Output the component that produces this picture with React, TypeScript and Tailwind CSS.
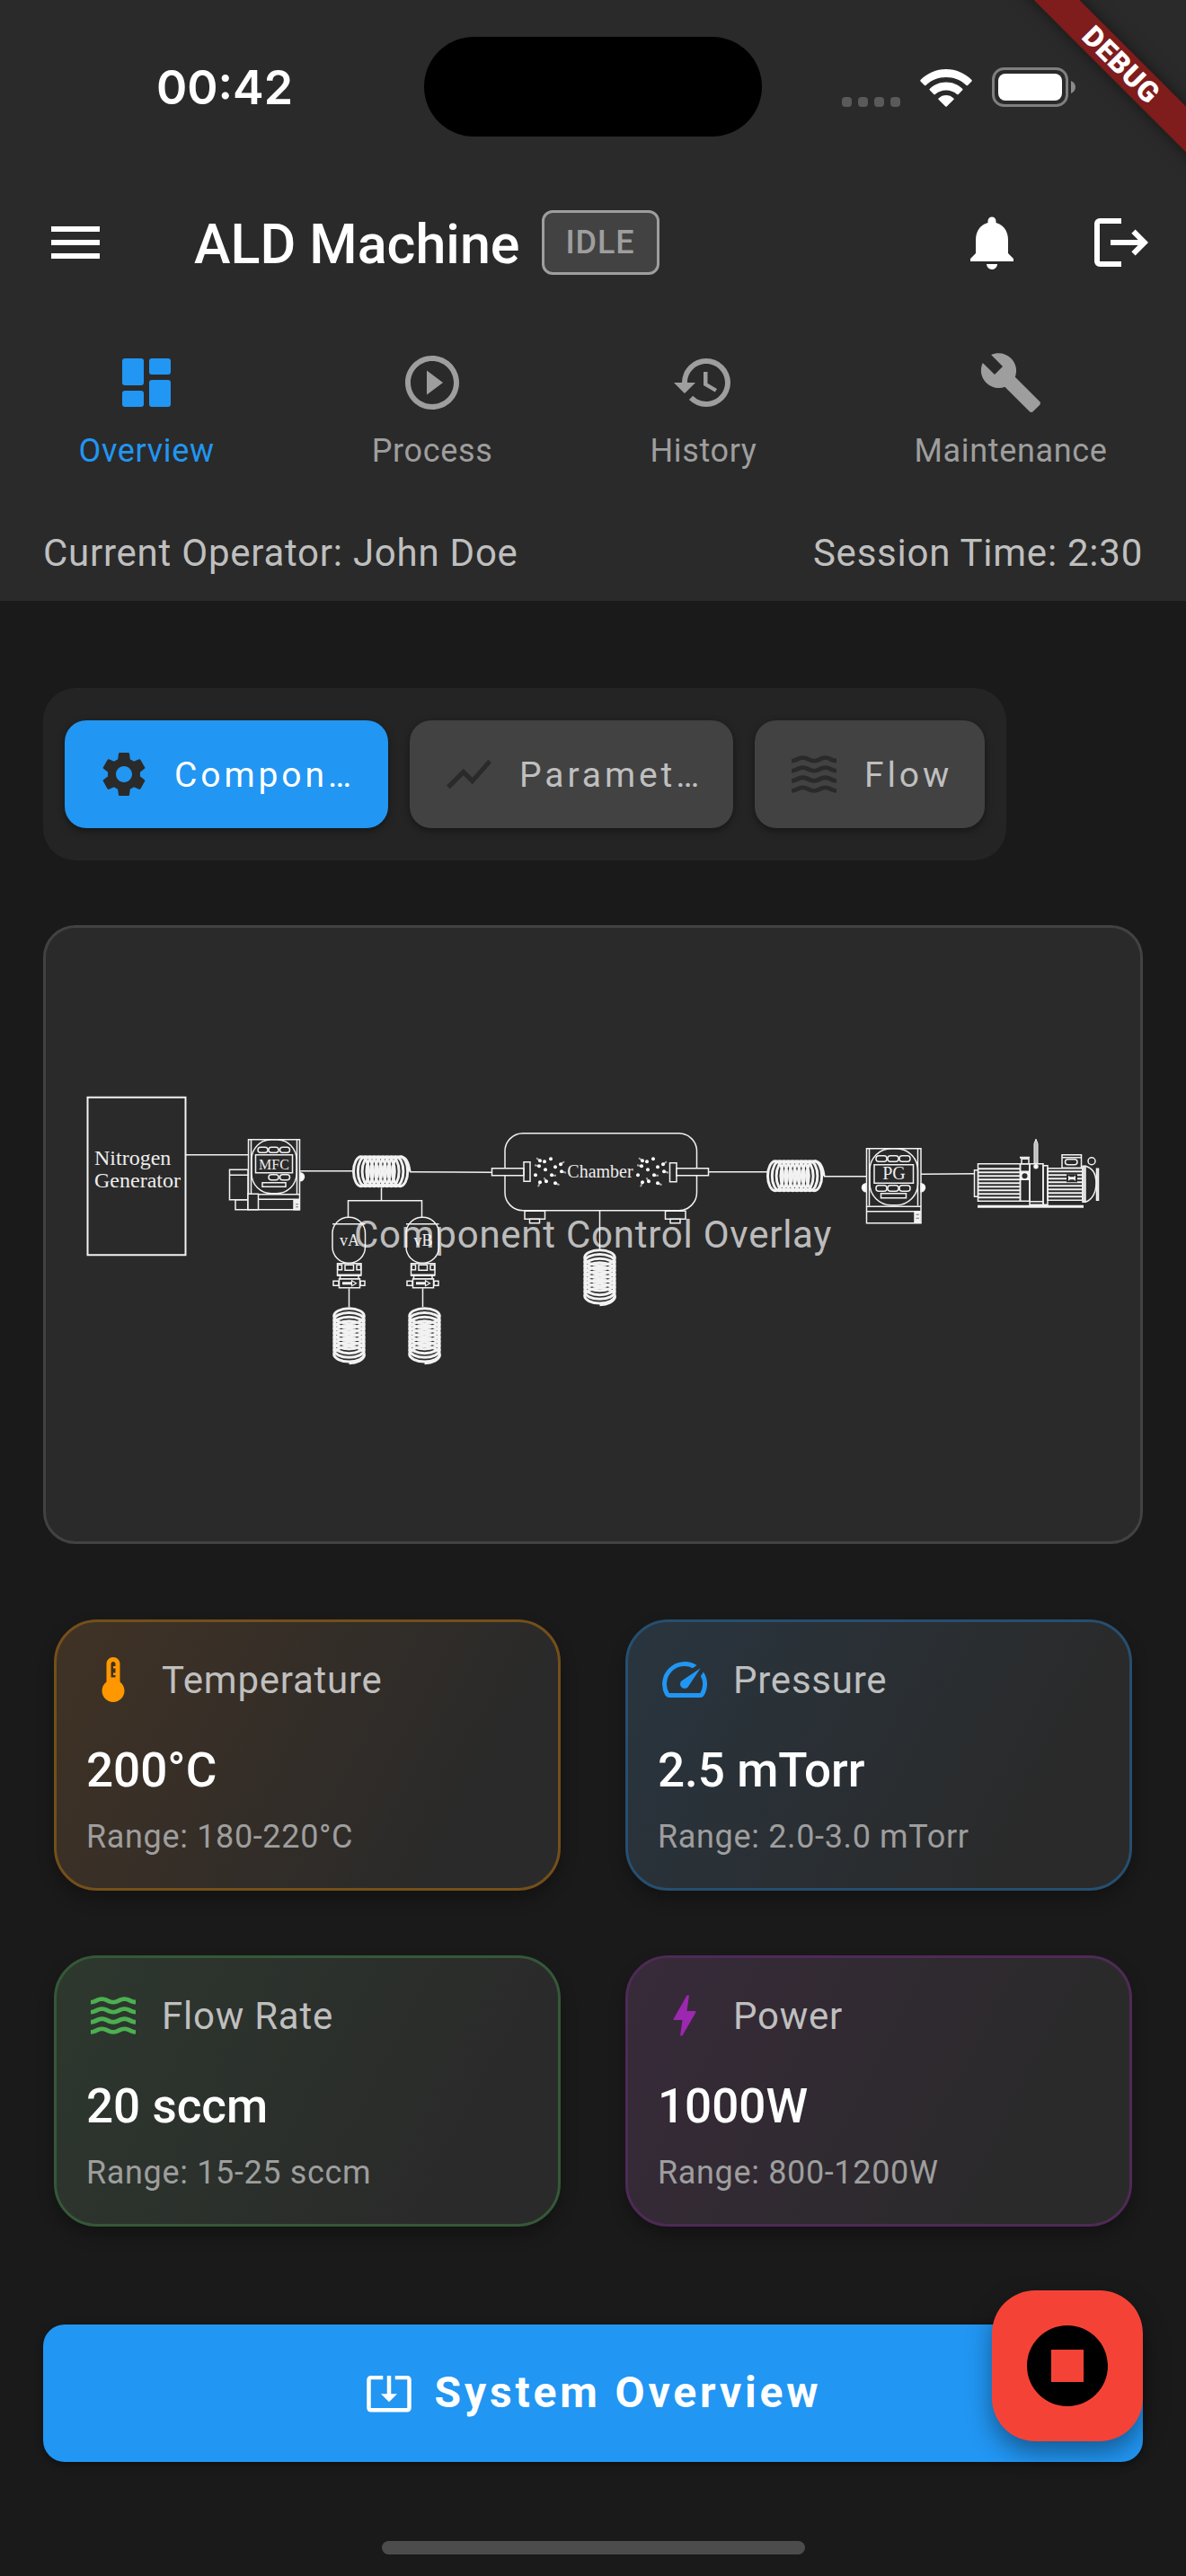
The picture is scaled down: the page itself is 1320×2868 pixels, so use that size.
import React from "react";
import {
  MdBolt,
  MdBuild,
  MdHistory,
  MdMenu,
  MdNotifications,
  MdPlayCircleOutline,
  MdSettings,
  MdShowChart,
  MdSpeed,
  MdStopCircle,
  MdSystemUpdateAlt,
  MdThermostat,
  MdWaves,
} from "react-icons/md";

function DashboardIcon({ className }: { className?: string }) {
  return (
    <svg viewBox="0 0 24 24" fill="currentColor" className={className} aria-hidden="true">
      <rect x="3" y="3" width="8" height="10" rx="1" />
      <rect x="13" y="3" width="8" height="6" rx="1" />
      <rect x="3" y="15" width="8" height="6" rx="1" />
      <rect x="13" y="11" width="8" height="10" rx="1" />
    </svg>
  );
}

function LogoutIcon({ className }: { className?: string }) {
  return (
    <svg viewBox="0 0 24 24" fill="none" stroke="currentColor" strokeWidth="2" className={className} aria-hidden="true">
      <path d="M12 4H4a1 1 0 0 0-1 1v14a1 1 0 0 0 1 1h8" />
      <path d="M8 12h12.500M16.500 7.900l4.100 4.100-4.100 4.100" />
    </svg>
  );
}

function StatusBar() {
  return (
    <div className="grid h-[186px] grid-cols-3 items-center">
      <time className="pt-[10px] pl-[60px] text-center font-[Inter] text-[52px] leading-[60px] font-semibold">
        00:42
      </time>
      <div className="mx-auto mt-[7px] h-[111px] w-[376px] rounded-full bg-black" />
      <div className="flex items-end gap-[22px] pt-[8px] pl-[57px]">
        <div className="flex gap-[7px]">
          {[0, 1, 2, 3].map((n) => (
            <span key={n} className="size-[11px] rounded-[4px] bg-[#5a5a5a]" />
          ))}
        </div>
        <svg viewBox="0 0 58 42" className="h-[42px] w-[58px]" fill="#fff" aria-label="Wi-Fi">
          <path d="M29 0C40 0 50 4.500 57.500 12Q58 12.700 57.500 13.400L53 17.900Q52.300 18.500 51.500 17.900C45.500 12.200 37.500 9 29 9S12.500 12.200 6.500 17.900Q5.700 18.500 5 17.900L.5 13.400Q0 12.700 .5 12C8 4.500 18 0 29 0Z" />
          <path d="M29 14.500C36 14.500 42.500 17.200 47.300 22Q48 22.600 47.300 23.300L42.700 27.900Q41.900 28.600 41.100 27.900C37.900 25.100 33.500 23.500 29 23.500S20.100 25.100 16.900 27.900Q16.100 28.600 15.300 27.900L10.700 23.300Q10 22.600 10.700 22C15.500 17.200 22 14.500 29 14.500Z" />
          <path d="M29 29C32 29 35 30.200 37.400 32.400Q38.200 33 37.500 33.700L29.700 41.500Q29 42.200 28.300 41.500L20.500 33.700Q19.800 33 20.600 32.400C23 30.200 26 29 29 29Z" />
        </svg>
        <svg viewBox="0 0 94 44" className="h-[44px] w-[94px]" aria-label="Battery">
          <rect x="1.500" y="1.500" width="82" height="41" rx="12" fill="none" stroke="#7f7f7f" strokeWidth="3" />
          <rect x="7" y="7" width="71" height="30" rx="8" fill="#fff" />
          <path d="M88 15c3 1.200 5 4 5 7s-2 5.800-5 7z" fill="#8a8a8a" />
        </svg>
      </div>
    </div>
  );
}

function DebugBanner() {
  return (
    <div className="pointer-events-none absolute top-0 right-0 z-20 size-[240px] overflow-hidden">
      <div className="absolute top-[54px] -right-[78px] flex h-[36px] w-[300px] rotate-45 items-center justify-center bg-[#7f1c1c] text-[32px] font-black tracking-wide text-white shadow-[0_0_18px_rgba(0,0,0,0.5)]">
        DEBUG
      </div>
    </div>
  );
}

const tabs = [
  { label: "Overview", icon: DashboardIcon, active: true },
  { label: "Process", icon: MdPlayCircleOutline, active: false },
  { label: "History", icon: MdHistory, active: false },
  { label: "Maintenance", icon: MdBuild, active: false },
];

function Header() {
  return (
    <header className="bg-[#2a2a2a]">
      <StatusBar />
      <div className="flex h-[168px] items-center pr-[36px] pl-[48px]">
        <button type="button" aria-label="Open menu">
          <MdMenu className="size-[72px]" />
        </button>
        <h1 className="ml-[96px] pt-[4px] text-[61px] leading-[72px] font-medium">ALD Machine</h1>
        <span className="ml-[24px] flex h-[72px] items-center rounded-[12px] border-[3px] border-[#9e9e9e] bg-[#424242] px-[24px] text-[36px] font-medium tracking-wide text-[#9e9e9e]">
          IDLE
        </span>
        <button type="button" aria-label="Notifications" className="ml-auto">
          <MdNotifications className="size-[72px]" />
        </button>
        <button type="button" aria-label="Log out" className="ml-[72px]">
          <LogoutIcon className="size-[72px]" />
        </button>
      </div>
      <nav className="flex h-[216px] justify-around pt-[36px]">
        {tabs.map(({ label, icon: Icon, active }) => (
          <button
            key={label}
            type="button"
            aria-current={active ? "page" : undefined}
            className={`flex flex-col items-center gap-[14px] self-start text-[36px] leading-[52px] tracking-[0.018em] ${active ? "text-[#2196f3]" : "text-[#9e9e9e]"}`}
          >
            <Icon className="size-[72px]" />
            {label}
          </button>
        ))}
      </nav>
      <div className="flex h-[99px] justify-between px-[48px] pt-[16px] text-[42px] leading-[60px] tracking-[0.018em] text-[#bfbfbf]">
        <span>Current Operator: John Doe</span>
        <span>Session Time: 2:30</span>
      </div>
    </header>
  );
}

const views = [
  { label: "Components", icon: MdSettings, active: true },
  { label: "Parameters", icon: MdShowChart, active: false },
  { label: "Flow", icon: MdWaves, active: false },
];

function ViewSwitch() {
  return (
    <div className="flex w-fit gap-[24px] rounded-[36px] bg-[#242424] px-[24px] py-[36px]">
      {views.map(({ label, icon: Icon, active }) => (
        <button
          key={label}
          type="button"
          aria-pressed={active}
          className={`flex h-[120px] max-w-[360px] items-center gap-[26px] rounded-[24px] px-[36px] text-[39px] tracking-widest shadow-[0_3px_8px_rgba(0,0,0,0.4)] ${active ? "bg-[#2196f3] text-white" : "bg-[#424242] text-[#bfbfbf]"}`}
        >
          <Icon className="size-[60px] shrink-0 text-[#2a2a2a]" />
          <span className="truncate pt-[2px]">{label}</span>
        </button>
      ))}
    </div>
  );
}

const loops = [0, 1, 2, 3, 4, 5, 6, 7, 8, 9];

function HorizontalCoil({ x, y }: { x: number; y: number }) {
  return (
    <g transform={`translate(${x} ${y})`} strokeWidth="3">
      {loops.map((n) => (
        <ellipse key={n} cx={10 + n * 4.8} cy="18" rx="8.500" ry="16.500" />
      ))}
      <path d="M54 1.500C60 2 63 10 64 18" />
    </g>
  );
}

function VerticalCoil({ x, y }: { x: number; y: number }) {
  return (
    <g transform={`translate(${x} ${y})`} strokeWidth="3">
      {loops.map((n) => (
        <ellipse key={n} cx="18.500" cy={10 + n * 4.7} rx="16.800" ry="8.500" />
      ))}
      <path d="M35.500 53C35 59 27 62 18.500 62.500" />
    </g>
  );
}

function Precursor({ x, label }: { x: number; label: string }) {
  return (
    <g transform={`translate(${x} 0)`}>
      <rect x="370" y="1355" width="36.500" height="51" rx="18" />
      <path d="M370 1362.500h36.500" />
      <text x="389" y="1387" fontSize="18" textAnchor="middle" fill="#ededed" stroke="none">
        {label}
      </text>
      <rect x="375.500" y="1406.500" width="26.500" height="13" />
      <rect x="376" y="1408" width="4.500" height="5.500" />
      <rect x="384" y="1408" width="9.500" height="6" />
      <rect x="397" y="1408" width="4.500" height="5.500" />
      <path d="M375 1419.500h27" strokeWidth="2.500" />
      <rect x="378.500" y="1420" width="20.500" height="3.500" />
      <rect x="377.500" y="1423.500" width="23" height="10" />
      <rect x="371" y="1426" width="6" height="5" />
      <rect x="401" y="1426" width="5" height="5" />
      <path d="M381 1428.500h11" strokeWidth="3" />
      <path d="M391.500 1425.500l5 3-5 3z" strokeWidth="1.200" />
      <path d="M388.500 1434v21" />
    </g>
  );
}

const particles = [
  [93, 70], [81, 72], [86, 73], [104, 76], [80, 78], [98, 79], [87, 82],
  [105, 84], [76, 88], [94, 88], [88, 95], [81, 96], [98, 97],
];

function Particles({ x }: { x: number }) {
  return (
    <g transform={`translate(${x} 1220)`}>
      <path
        d="M81 72l-4-3M104 76l4-3M80 78l-5-1M105 84l5 1.500M94 88.500h5M88 95l-2.500-4M81 96l-2 5M98 97l4.500 2"
        stroke="#a5a5a5"
        strokeWidth="2"
      />
      {particles.map(([cx, cy]) => (
        <circle key={`${cx}-${cy}`} cx={cx} cy={cy} r="2" fill="#fff" stroke="none" />
      ))}
    </g>
  );
}

const leftFins = [1301, 1305, 1309, 1313, 1317, 1321, 1325, 1329, 1333];
const rightFins = [1304, 1308, 1312, 1316, 1320, 1324, 1328, 1332];

function ProcessDiagram() {
  return (
    <svg
      viewBox="51 1033 1218 682"
      className="h-full w-full font-['Liberation_Serif',serif]"
      fill="none"
      stroke="#f2f2f2"
      strokeWidth="1.500"
      role="img"
      aria-label="Gas flow from nitrogen generator through chamber to pump"
    >
      <rect x="97.500" y="1221.500" width="109" height="175.500" strokeWidth="2" />
      <g fill="#ededed" stroke="none" fontSize="24">
        <text x="105" y="1297">Nitrogen</text>
        <text x="105" y="1322">Generator</text>
      </g>
      <path d="M207 1285.500h69M334 1303.500h58M456 1304.500l91 .5M789 1304.500h65M917 1309.500h47M1025 1307l59-.5" />

      {/* Mass flow controller */}
      <rect x="276.500" y="1268.500" width="57" height="78" />
      <path d="M279.500 1268v61M330.500 1268v61M276 1329.500h57M287 1335h46" />
      <rect x="280" y="1268.500" width="50" height="60" rx="22" />
      <rect x="287" y="1277" width="11" height="6" rx="3" />
      <rect x="299" y="1277" width="11" height="6" rx="3" />
      <rect x="311.500" y="1277" width="11" height="6" rx="3" />
      <rect x="284.500" y="1285.500" width="41" height="20" />
      <text x="305" y="1302" fontSize="16" textAnchor="middle" fill="#ededed" stroke="none">
        MFC
      </text>
      <rect x="299" y="1307.500" width="11" height="6" rx="3" />
      <rect x="311.500" y="1307.500" width="11" height="6" rx="3" />
      <rect x="292" y="1316.500" width="26" height="4.500" />
      <path d="M334 1305.500a4.500 4.500 0 0 1 0 9z" fill="#fff" />
      <rect x="255.500" y="1302" width="20.500" height="33.500" />
      <path d="M255.500 1308h20.500" />
      <rect x="262" y="1335.500" width="14" height="11" />
      <rect x="276" y="1329" width="11.500" height="17.500" fill="#2a2a2a" />
      <rect x="327" y="1335.500" width="6" height="11" fill="#f2f2f2" />
      <path d="M329 1340.500h3M329 1343.500h3" stroke="#777" strokeWidth="1" />

      <HorizontalCoil x={392} y={1286} />
      <path d="M424.500 1322v14M387.500 1355v-18.500H469.500V1355" />
      <Precursor x={0} label="vA" />
      <Precursor x={82} label="vB" />
      <VerticalCoil x={370} y={1455} />
      <VerticalCoil x={454} y={1455} />

      {/* Reaction chamber */}
      <rect x="562" y="1261.500" width="213.500" height="86" rx="20" />
      <rect x="547.500" y="1300.500" width="35.500" height="8" fill="#2a2a2a" />
      <rect x="583" y="1293.500" width="7" height="21.500" />
      <rect x="745.500" y="1294.500" width="7.500" height="21" />
      <rect x="753" y="1300.500" width="35.500" height="8" fill="#2a2a2a" />
      <Particles x={520} />
      <Particles x={634} />
      <text x="668" y="1311" fontSize="20" textAnchor="middle" fill="#ededed" stroke="none">
        Chamber
      </text>
      <rect x="584" y="1348" width="22.500" height="9" />
      <rect x="589.500" y="1357" width="11" height="4.500" />
      <rect x="740.500" y="1348" width="22.500" height="9" />
      <rect x="746" y="1357" width="11" height="4.500" />
      <path d="M667.500 1347v44" />
      <VerticalCoil x={649} y={1390} />
      <HorizontalCoil x={853} y={1291} />

      {/* Pressure gauge */}
      <rect x="964.500" y="1278.500" width="60.500" height="83" />
      <path d="M967.500 1278v64M1021.500 1278v64M964 1343h61M964 1348.500h61" />
      <rect x="968" y="1278.500" width="53.500" height="63" rx="24" />
      <rect x="975" y="1286.500" width="12" height="6.500" rx="3" />
      <rect x="988" y="1286.500" width="12" height="6.500" rx="3" />
      <rect x="1001" y="1286.500" width="12" height="6.500" rx="3" />
      <rect x="975" y="1319.500" width="12" height="6.500" rx="3" />
      <rect x="988" y="1319.500" width="12" height="6.500" rx="3" />
      <rect x="1001" y="1319.500" width="12" height="6.500" rx="3" />
      <rect x="973" y="1296.500" width="43.500" height="20.500" />
      <text x="995" y="1313" fontSize="20" textAnchor="middle" fill="#ededed" stroke="none">
        PG
      </text>
      <rect x="980.500" y="1328.500" width="28" height="5" />
      <path d="M964 1317.500a4.500 4.500 0 0 0 0 9zM1025 1317.500a4.500 4.500 0 0 1 0 9z" fill="#fff" />
      <rect x="1018" y="1349" width="6" height="11.500" fill="#f2f2f2" />
      <path d="M1019.500 1352h3.500M1019.500 1356h3.500" stroke="#777" strokeWidth="1" />

      {/* Vacuum pump */}
      <rect x="1084.500" y="1302.500" width="4" height="29.500" />
      <rect x="1088.500" y="1295.500" width="47" height="41.500" />
      {leftFins.map((y) => (
        <path key={y} d={`M1088 ${y}h47`} strokeWidth="2" />
      ))}
      <rect x="1135.500" y="1295.500" width="10.500" height="41.500" />
      <rect x="1137" y="1290" width="8" height="5.500" />
      <path d="M1135 1288.500h11" strokeWidth="2" />
      <path d="M1136 1304h9v9h-9z" fill="#f2f2f2" />
      <circle cx="1140.500" cy="1309" r="3" fill="#2a2a2a" stroke="none" />
      <rect x="1146" y="1295.500" width="15" height="45.500" />
      <path d="M1146 1337.500h15" />
      <path d="M1153 1268l2 5v22h-4v-22z" fill="#bdbdbd" strokeWidth="1" />
      <circle cx="1153" cy="1298.500" r="2" fill="#fff" />
      <rect x="1161" y="1297.500" width="5" height="43.500" />
      <rect x="1166" y="1300.500" width="39" height="35.500" />
      {rightFins.map((y) => (
        <path key={y} d={`M1166 ${y}h39`} strokeWidth="2" />
      ))}
      <rect x="1187" y="1307" width="12" height="9" fill="#2a2a2a" stroke="none" />
      <path d="M1189 1308.500l2 1.500h4l2-1.500v6l-2-1.500h-4l-2 1.500z" fill="#f2f2f2" stroke="none" />
      <rect x="1182" y="1285.500" width="21.500" height="14.500" />
      <path d="M1182 1288.500h21.500" />
      <rect x="1185.500" y="1290.500" width="13.500" height="6" rx="3" />
      <circle cx="1215" cy="1292.500" r="4" />
      <rect x="1205" y="1298" width="3" height="40" fill="#d5d5d5" />
      <path d="M1208 1298c8 2 12 8 12 19s-5 19-12 21" />
      <rect x="1220.500" y="1301" width="2" height="35" fill="#d5d5d5" />
      <path d="M1088 1343h118" strokeWidth="3" />
    </svg>
  );
}

const readings = [
  {
    label: "Temperature",
    value: "200°C",
    range: "Range: 180-220°C",
    icon: MdThermostat,
    tint: "text-[#ff9800]",
    card: "border-[#744f1b] from-[#403225]",
  },
  {
    label: "Pressure",
    value: "2.5 mTorr",
    range: "Range: 2.0-3.0 mTorr",
    icon: MdSpeed,
    tint: "text-[#2196f3]",
    card: "border-[#264f70] from-[#29353f]",
  },
  {
    label: "Flow Rate",
    value: "20 sccm",
    range: "Range: 15-25 sccm",
    icon: MdWaves,
    tint: "text-[#4caf50]",
    card: "border-[#355838] from-[#2d382e]",
  },
  {
    label: "Power",
    value: "1000W",
    range: "Range: 800-1200W",
    icon: MdBolt,
    tint: "text-[#9c27b0]",
    card: "border-[#4f2a56] from-[#382a3a]",
  },
];

function Readings() {
  return (
    <section className="mt-[84px] grid grid-cols-2 gap-[72px] px-[12px]">
      {readings.map(({ label, value, range, icon: Icon, tint, card }) => (
        <article
          key={label}
          className={`rounded-[48px] border-[3px] bg-linear-[118deg] to-[#2a2a2a] to-80% px-[33px] py-[33px] shadow-[0_9px_18px_rgba(0,0,0,0.3)] ${card}`}
        >
          <div className="flex items-center gap-[24px]">
            <Icon className={`size-[60px] ${tint}`} />
            <h2 className="pt-[2px] text-[42px] leading-[60px] tracking-[0.018em] text-[#bfbfbf]">{label}</h2>
          </div>
          <p className="mt-[34px] text-[53px] leading-[72px] font-medium">{value}</p>
          <p className="mt-[14px] text-[36px] leading-[48px] tracking-[0.018em] text-[#9e9e9e]">{range}</p>
        </article>
      ))}
    </section>
  );
}

export default function App() {
  return (
    <div className="relative flex min-h-screen flex-col bg-[#1a1a1a] font-[Roboto,sans-serif] text-white">
      <DebugBanner />
      <Header />
      <main className="px-[48px] pt-[97px]">
        <ViewSwitch />
        <section className="relative mt-[72px] aspect-video overflow-hidden rounded-[36px] border-[3px] border-[#424242] bg-[#2a2a2a]">
          <ProcessDiagram />
          <p className="absolute inset-0 flex items-center justify-center text-[42px] tracking-[0.018em] text-white/70">
            Component Control Overlay
          </p>
        </section>
        <Readings />
        <button
          type="button"
          className="mt-[109px] flex h-[153px] w-full items-center justify-center gap-[24px] rounded-[24px] bg-[#2196f3] text-[48px] font-bold tracking-[0.08em] shadow-[0_3px_8px_rgba(0,0,0,0.4)]"
        >
          <MdSystemUpdateAlt className="size-[54px]" />
          System Overview
        </button>
      </main>
      <button
        type="button"
        aria-label="Emergency stop"
        className="absolute right-[48px] bottom-[150px] flex size-[168px] items-center justify-center rounded-[48px] bg-[#f44336] text-black shadow-[0_12px_28px_rgba(0,0,0,0.4)]"
      >
        <MdStopCircle className="size-[108px]" />
      </button>
      <footer className="mt-auto pb-[24px]">
        <div className="mx-auto h-[15px] w-[471px] rounded-full bg-[#4c4c4c]" />
      </footer>
    </div>
  );
}
